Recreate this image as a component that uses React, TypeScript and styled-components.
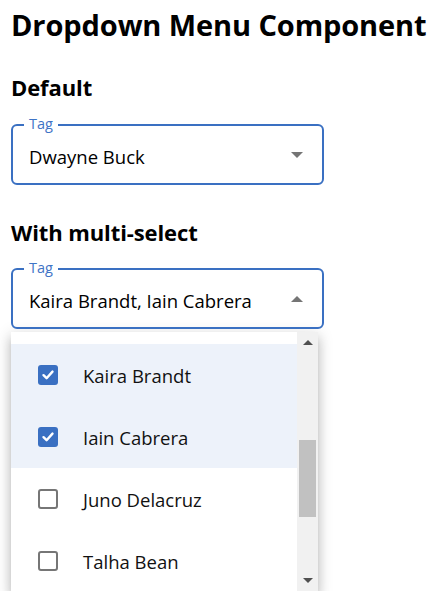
import React, { useEffect, useRef } from "react";
import styled, { createGlobalStyle } from "styled-components";

const Global = createGlobalStyle`
  html, body { margin: 0; padding: 0; background: #fff; }
  body { font-family: "Open Sans", "Noto Sans", sans-serif; color: #000; }
`;

const Page = styled.div`
  display: flex;
  flex-direction: column;
  padding: 5px 0 0 11px;
  width: 435px;
  box-sizing: border-box;
`;

const Title = styled.h1`
  margin: 0;
  font-size: 29px;
  font-weight: 700;
  line-height: 40px;
  letter-spacing: -0.1px;
  white-space: nowrap;
`;

const SectionTitle = styled.h3<{ $top: number }>`
  margin: ${(p) => p.$top}px 0 0 0;
  font-size: 22px;
  font-weight: 700;
  line-height: 26px;
  letter-spacing: -0.1px;
`;

const Field = styled.div<{ $top: number }>`
  position: relative;
  margin-top: ${(p) => p.$top}px;
  width: 313px;
  height: 61px;
  box-sizing: border-box;
  border: 2px solid #3a70c2;
  border-radius: 6px;
  display: flex;
  align-items: center;
  padding: 0 19px 0 16px;
`;

const FieldLabel = styled.span`
  position: absolute;
  top: -11px;
  left: 11px;
  padding: 0 5px;
  background: #fff;
  color: #3f74c6;
  font-size: 14.5px;
  line-height: 18px;
`;

const Value = styled.span`
  flex: 1;
  font-size: 18.5px;
  line-height: 24px;
  padding-top: 4px;
  white-space: nowrap;
  overflow: hidden;
`;

const Caret = styled.span<{ $up?: boolean }>`
  width: 0;
  height: 0;
  border-left: 6px solid transparent;
  border-right: 6px solid transparent;
  ${(p) =>
    p.$up
      ? "border-bottom: 6px solid #757575;"
      : "border-top: 6px solid #757575;"}
`;

const Menu = styled.div`
  margin-top: 3px;
  width: 307px;
  height: 259px;
  background: #fff;
  box-shadow: 0 5px 5px -3px rgba(0, 0, 0, 0.2), 0 8px 10px 1px rgba(0, 0, 0, 0.14),
    0 3px 14px 2px rgba(0, 0, 0, 0.12);
  display: flex;
`;

const Viewport = styled.div`
  flex: 1;
  overflow: hidden;
`;

const List = styled.ul`
  list-style: none;
  margin: 0;
  padding: 8px 0;
`;

const Item = styled.li<{ $selected: boolean }>`
  height: 62px;
  display: flex;
  align-items: center;
  padding-left: 27px;
  gap: 25px;
  background: ${(p) => (p.$selected ? "#edf2fa" : "#fff")};
  font-size: 18.5px;
  color: #111;
`;

const Box = styled.span<{ $checked: boolean }>`
  width: 20px;
  height: 20px;
  box-sizing: border-box;
  border-radius: 3px;
  display: flex;
  align-items: center;
  justify-content: center;
  background: ${(p) => (p.$checked ? "#3a70c2" : "#fff")};
  border: ${(p) => (p.$checked ? "none" : "2px solid #767676")};
`;

const ScrollBar = styled.div`
  width: 21px;
  background: #f1f1f1;
  display: flex;
  flex-direction: column;
`;

const ScrollButton = styled.div<{ $up?: boolean }>`
  height: 21px;
  display: flex;
  align-items: center;
  justify-content: center;
  &::before {
    content: "";
    width: 0;
    height: 0;
    border-left: 5px solid transparent;
    border-right: 5px solid transparent;
    ${(p) =>
      p.$up ? "border-bottom: 5px solid #505050;" : "border-top: 5px solid #505050;"}
  }
`;

const Track = styled.div`
  flex: 1;
  display: flex;
  flex-direction: column;
  align-items: center;
`;

const Thumb = styled.div`
  width: 17px;
  background: #c1c1c1;
`;

const names = [
  "Dwayne Buck",
  "Amira Hale",
  "Rufus Stone",
  "Elsie Walton",
  "Harlan Price",
  "Kaira Brandt",
  "Iain Cabrera",
  "Juno Delacruz",
  "Talha Bean",
  "Nadia Pearce",
  "Oscar Lowe",
  "Freya Mills",
];
const selected = new Set(["Kaira Brandt", "Iain Cabrera"]);

const ROW = 62;
const PAD = 8;
const VIEW = 259;
const SCROLL = 306;
const TRACK = VIEW - 42;
const total = PAD * 2 + ROW * names.length;
const thumbLen = Math.round((VIEW / total) * TRACK) + 3;
const thumbTop = Math.round((SCROLL / total) * TRACK);

const Check = () => (
  <svg width="14" height="14" viewBox="0 0 14 14">
    <path d="M2.5 7.2 L5.6 10.2 L11.5 3.6" fill="none" stroke="#fff" strokeWidth="2.4" strokeLinecap="round" strokeLinejoin="round" />
  </svg>
);

export default function App() {
  const viewRef = useRef<HTMLDivElement>(null);
  useEffect(() => {
    if (viewRef.current) viewRef.current.scrollTop = SCROLL;
  }, []);
  return (
    <Page>
      <Global />
      <Title>Dropdown Menu Component</Title>
      <SectionTitle $top={29}>Default</SectionTitle>
      <Field $top={24}>
        <FieldLabel>Tag</FieldLabel>
        <Value>Dwayne Buck</Value>
        <Caret />
      </Field>
      <SectionTitle $top={34}>With multi-select</SectionTitle>
      <Field $top={23}>
        <FieldLabel>Tag</FieldLabel>
        <Value>Kaira Brandt, Iain Cabrera</Value>
        <Caret $up />
      </Field>
      <Menu>
        <Viewport ref={viewRef}>
          <List>
            {names.map((n) => {
              const c = selected.has(n);
              return (
                <Item key={n} $selected={c}>
                  <Box $checked={c}>{c && <Check />}</Box>
                  {n}
                </Item>
              );
            })}
          </List>
        </Viewport>
        <ScrollBar>
          <ScrollButton $up />
          <Track>
            <Thumb style={{ marginTop: thumbTop, height: thumbLen }} />
          </Track>
          <ScrollButton />
        </ScrollBar>
      </Menu>
    </Page>
  );
}
